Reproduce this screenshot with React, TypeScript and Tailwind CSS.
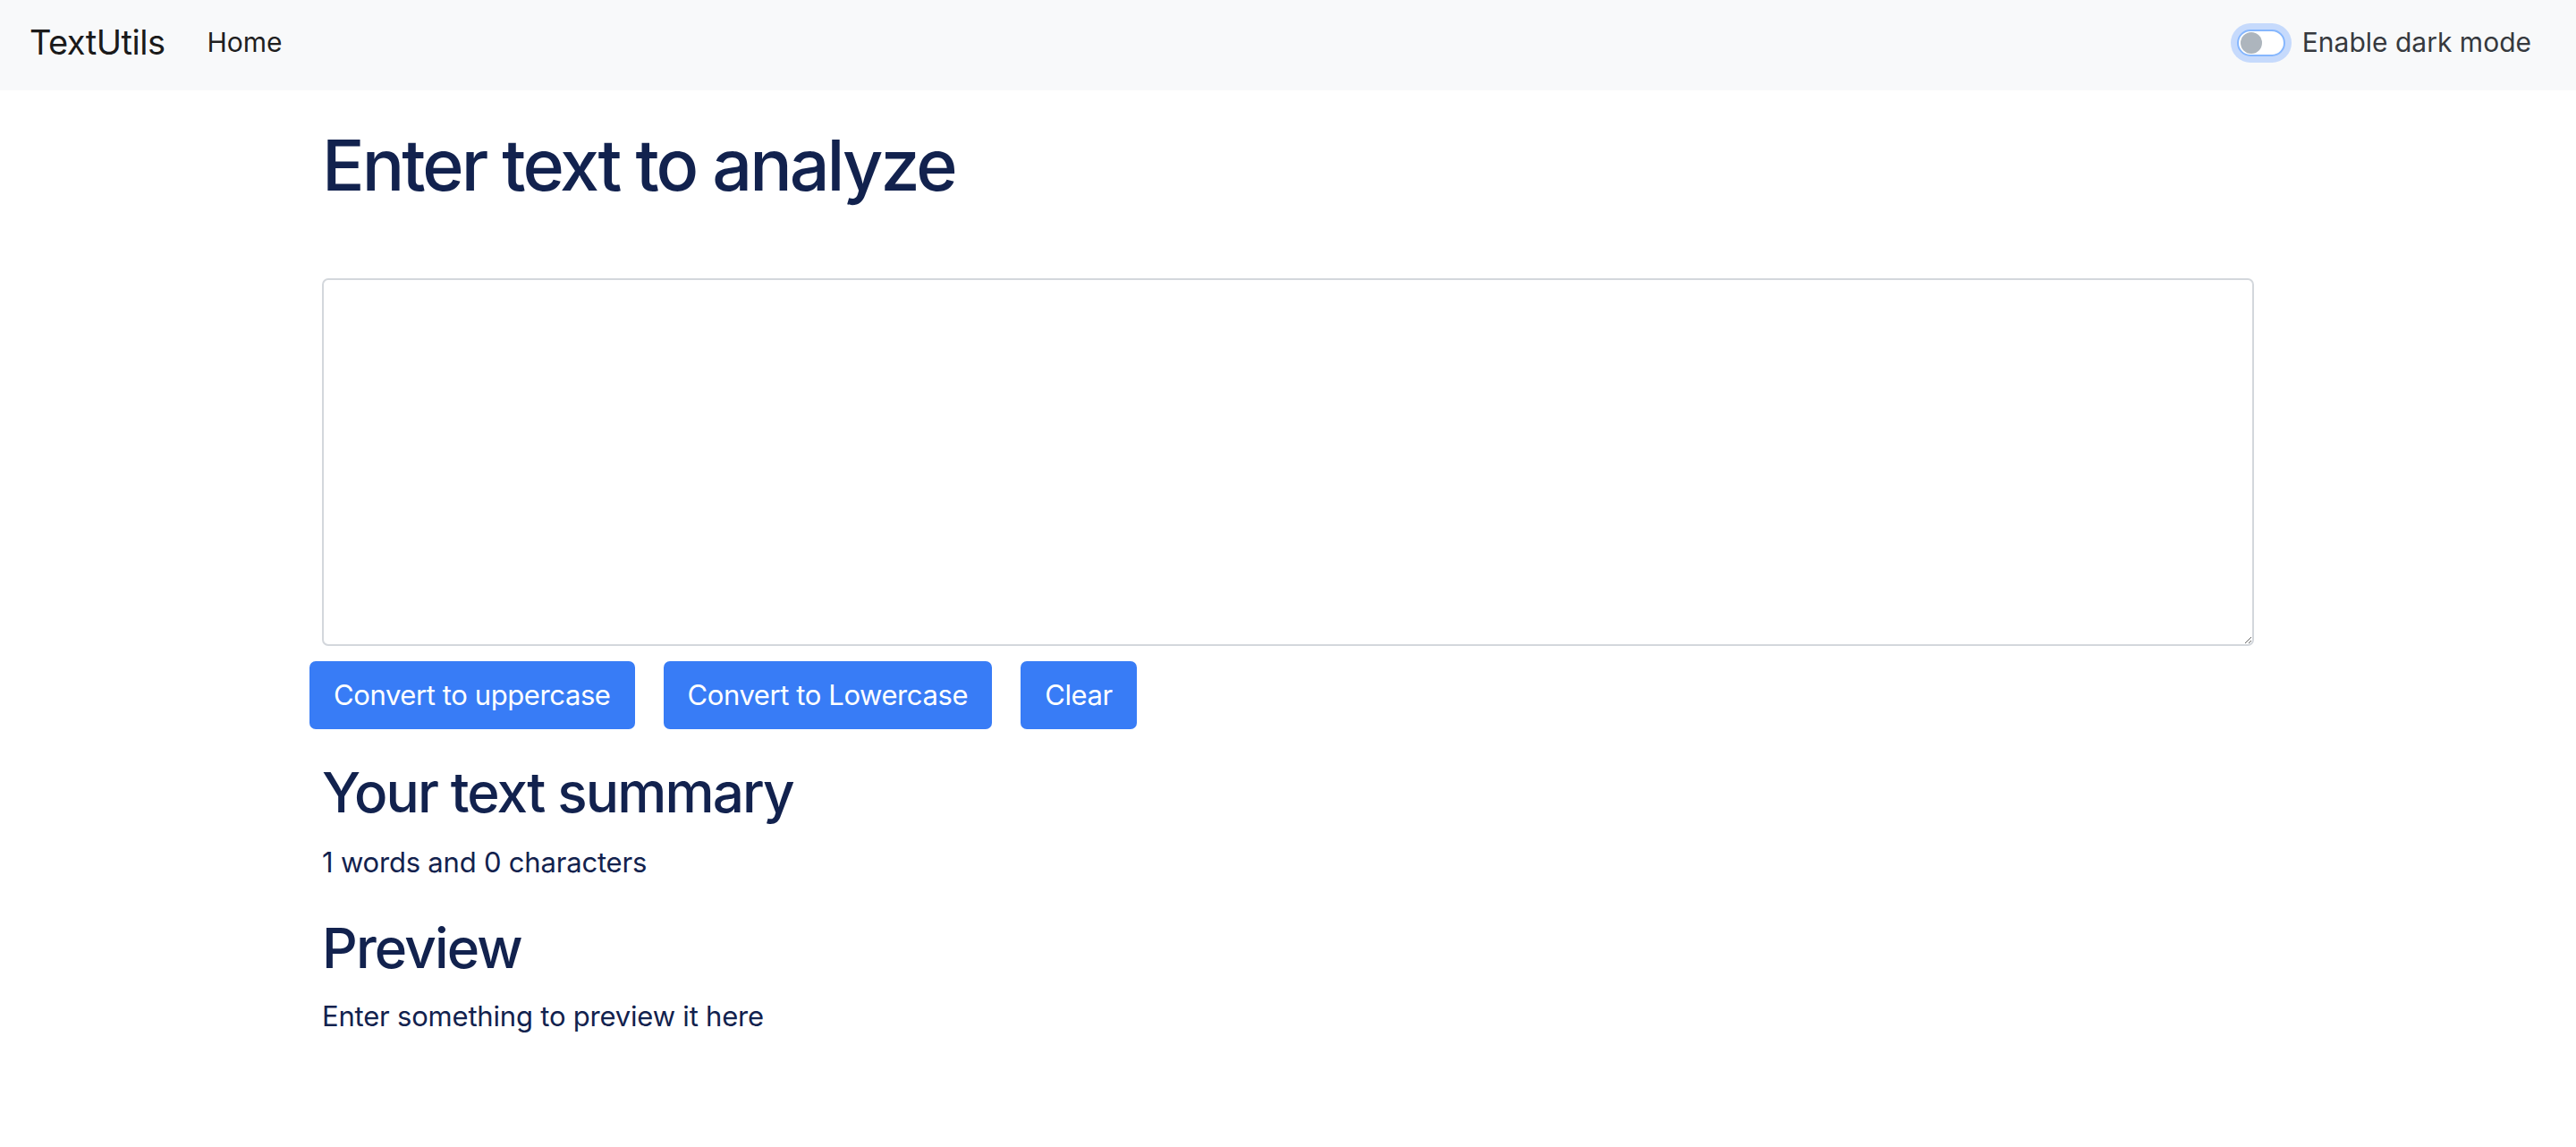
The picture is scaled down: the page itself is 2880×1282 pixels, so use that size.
import { useState } from "react";

const font = { fontFamily: "Inter, 'Noto Sans', sans-serif" };

const Navbar = () => (
  <nav className="flex h-[101px] items-center justify-between bg-[#f8f9fa] pb-[6px] pl-[33px] pr-[50px]">
    <div className="flex items-center">
      <a className="text-[38px] leading-[1.2] tracking-[-0.5px] text-[#1a1a1a]">TextUtils</a>
      <a className="ml-[47px] text-[30px] leading-[1.5] text-[#1f1f1f]">Home</a>
    </div>
    <label className="flex items-center gap-[19px]">
      <span className="flex h-[30px] w-[54px] items-center rounded-full border-2 border-[#86b7fe] bg-white pl-[2px] shadow-[0_0_0_7px_#c6dafc]">
        <span className="h-[24px] w-[24px] rounded-full bg-[#adb5bd]" />
      </span>
      <span className="text-[30px] leading-[1.5] text-[#36393e]">Enable dark mode</span>
    </label>
  </nav>
);

export default function App() {
  const [text, setText] = useState("");
  const words = text.split(" ").length;

  return (
    <div className="min-h-screen bg-white" style={font}>
      <Navbar />
      <main className="mx-auto w-[2160px] pt-[36px] text-[#12224e]">
        <h1 className="mb-[79px] text-[79px] leading-[95px] font-medium tracking-[-0.038em]">
          Enter text to analyze
        </h1>
        <textarea
          value={text}
          onChange={(e) => setText(e.target.value)}
          className="block h-[411px] w-full rounded-[7px] border-2 border-[#d3d7dc] bg-white px-[22px] py-[12px] text-[31px] outline-none"
        />
        <div className="-ml-[14px] mt-[17px] flex gap-[32px]">
          {["Convert to uppercase", "Convert to Lowercase", "Clear"].map((b) => (
            <button
              key={b}
              className="h-[76px] rounded-[7px] bg-[#387cf6] px-[27px] text-[31px] tracking-[-0.4px] text-white"
            >
              {b}
            </button>
          ))}
        </div>
        <h2 className="mt-[34px] text-[62px] leading-[74px] font-medium tracking-[-0.03em]">
          Your text summary
        </h2>
        <p className="mt-[18px] text-[31px] leading-[46px] tracking-[-0.2px]">
          {words} words and {text.length} characters
        </p>
        <h2 className="mt-[36px] text-[62px] leading-[74px] font-medium tracking-[-0.03em]">Preview</h2>
        <p className="mt-[16px] text-[31px] leading-[46px] tracking-[-0.2px]">
          {text.length > 0 ? text : "Enter something to preview it here"}
        </p>
      </main>
    </div>
  );
}
